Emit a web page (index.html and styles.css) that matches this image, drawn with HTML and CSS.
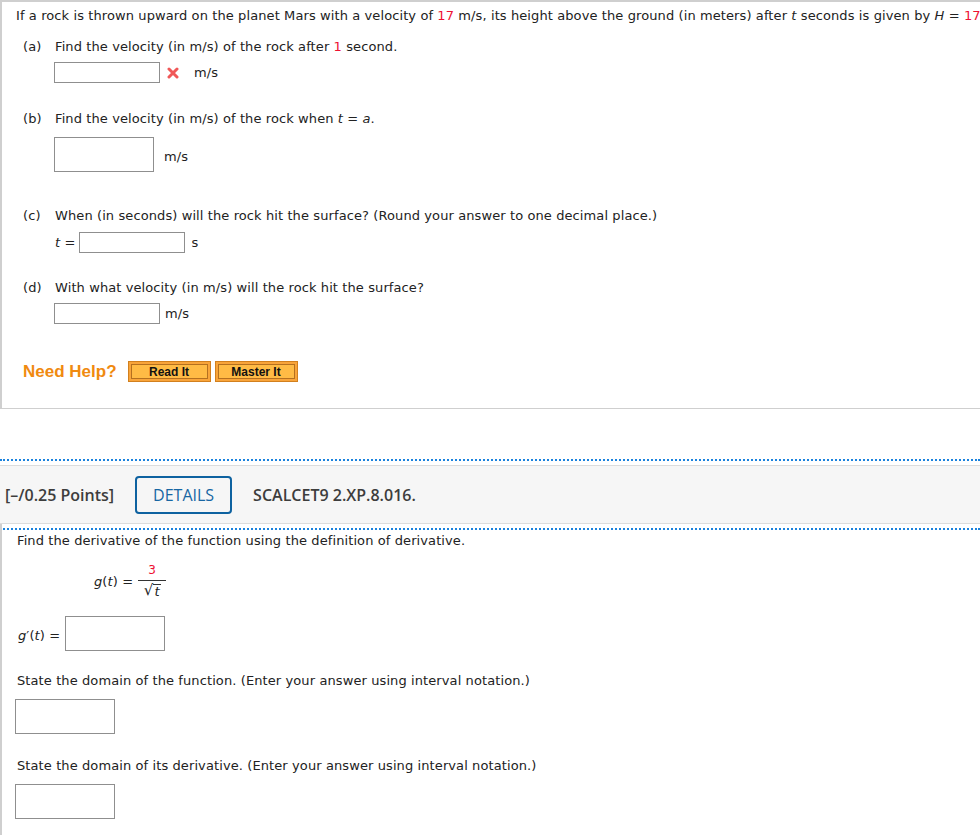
FILE: index.html
```html
<!DOCTYPE html>
<html>
<head>
<meta charset="utf-8">
<link rel="stylesheet" href="styles.css">
</head>
<body>
<div class="panel panel-top">
  <p class="intro">If a rock is thrown upward on the planet Mars with a velocity of <span class="red">17</span> m/s, its height above the ground (in meters) after <i>t</i> seconds is given by <i>H</i> = <span class="red">17</span><i>t</i> − <span class="red">1.86</span><i>t</i><sup>2</sup>.</p>

  <div class="part part-a">
    <span class="plabel">(a)</span><span>Find the velocity (in m/s) of the rock after <span class="red">1</span> second.</span>
  </div>
  <div class="answer answer-a">
    <span class="inp inp-small"></span>
    <svg class="xmark" width="12" height="12" viewBox="0 0 12 12"><path d="M2 2 L10 10 M10 2 L2 10" stroke="#f05858" stroke-width="3" stroke-linecap="round"/></svg>
    <span class="unit unit-a">m/s</span>
  </div>

  <div class="part part-b">
    <span class="plabel">(b)</span><span>Find the velocity (in m/s) of the rock when <i>t</i> = <i>a</i>.</span>
  </div>
  <div class="answer answer-b">
    <span class="inp inp-big"></span>
    <span class="unit unit-b">m/s</span>
  </div>

  <div class="part part-c">
    <span class="plabel">(c)</span><span>When (in seconds) will the rock hit the surface? (Round your answer to one decimal place.)</span>
  </div>
  <div class="answer answer-c">
    <span class="teq"><i>t</i> =</span>
    <span class="inp inp-small"></span>
    <span class="unit unit-c">s</span>
  </div>

  <div class="part part-d">
    <span class="plabel">(d)</span><span>With what velocity (in m/s) will the rock hit the surface?</span>
  </div>
  <div class="answer answer-d">
    <span class="inp inp-small"></span>
    <span class="unit unit-d">m/s</span>
  </div>

  <div class="help">
    <span class="need">Need Help?</span>
    <span class="btn"><span class="btn-in">Read It</span></span>
    <span class="btn"><span class="btn-in">Master It</span></span>
  </div>
</div>

<div class="dots dots-first"></div>
<div class="qhead">
  <span class="points">[–/0.25 Points]</span>
  <span class="details">DETAILS</span>
  <span class="code">SCALCET9 2.XP.8.016.</span>
</div>
<div class="dots"></div>

<div class="panel panel-bottom">
  <p class="find">Find the derivative of the function using the definition of derivative.</p>
  <div class="formula">
    <span class="fn"><i>g</i>(<i>t</i>) =</span>
    <span class="frac">
      <span class="num red">3</span>
      <span class="den"><span class="rad">√</span><span class="radicand"><i>t</i></span></span>
    </span>
  </div>
  <div class="gprime">
    <span class="fn"><i>g</i>′(<i>t</i>) =</span>
    <span class="inp inp-big"></span>
  </div>
  <p class="domain">State the domain of the function. (Enter your answer using interval notation.)</p>
  <span class="inp inp-big block"></span>
  <p class="domain domain-2">State the domain of its derivative. (Enter your answer using interval notation.)</p>
  <span class="inp inp-big block"></span>
</div>
</body>
</html>
```
FILE: styles.css
```css
html, body {
  margin: 0;
  padding: 0;
  overflow: hidden;
  background: #fff;
}
body {
  font-family: "DejaVu Sans", Verdana, sans-serif;
  font-size: 13px;
  letter-spacing: 0.1px;
  color: #222;
  width: 980px;
}
p { margin: 0; }
.red { color: #ee1133; }
i { font-style: italic; }
sup { font-size: 9px; line-height: 0; }

.panel {
  border-left: 2px solid #cfcfcf;
}
.panel-top {
  border-top: 2px solid #cfcfcf;
  border-bottom: 1px solid #cfcfcf;
  padding: 5px 0 26px 14px;
  width: 1200px;
}
.intro {
  line-height: 18px;
  white-space: nowrap;
}
.part {
  display: flex;
  line-height: 18px;
  padding-left: 7px;
}
.plabel { width: 32px; flex: none; }
.part-a { margin-top: 13px; }
.part-b { margin-top: 27px; }
.part-c { margin-top: 35px; }
.part-d { margin-top: 26px; }

.answer {
  display: flex;
  align-items: center;
  padding-left: 38px;
}
.answer-a { margin-top: 6px; }
.answer-b { margin-top: 9px; }
.answer-c { margin-top: 7px; padding-left: 39px; }
.answer-d { margin-top: 6px; }

.inp {
  display: inline-block;
  box-sizing: border-box;
  border: 1px solid #8f8f8f;
  background: #fff;
}
.inp-small { width: 106px; height: 21px; }
.inp-big { width: 100px; height: 35px; }
.block { display: block; }

.xmark { margin-left: 7px; }
.unit-a { margin-left: 15px; }
.unit-b { margin-left: 10px; padding-top: 3px; }
.unit-c { margin-left: 6px; }
.unit-d { margin-left: 5px; }
.teq { margin-right: 4px; }

.help {
  margin-top: 37px;
  padding-left: 7px;
  display: flex;
  align-items: center;
  height: 21px;
}
.need {
  font-family: "Liberation Sans", Arial, sans-serif;
  font-weight: bold;
  font-size: 17px;
  letter-spacing: 0;
  color: #f08a10;
  margin-right: 11px;
}
.btn {
  box-sizing: border-box;
  width: 83px;
  height: 21px;
  border: 1px solid #d2801e;
  background: #f8a43a;
  padding: 2px;
  margin-right: 4px;
  display: flex;
}
.btn-in {
  flex: 1;
  border: 1px solid #b5701f;
  background: #ffbb45;
  font-family: "Liberation Sans", Arial, sans-serif;
  font-weight: bold;
  font-size: 12px;
  letter-spacing: 0;
  color: #111;
  display: flex;
  align-items: center;
  justify-content: center;
}

.dots {
  border-top: 2px dotted #1a82dd;
  height: 0;
}
.dots-first { margin-top: 50px; }
.qhead {
  margin: 4px 0;
  height: 59px;
  box-sizing: border-box;
  border-top: 1px solid #dcdcdc;
  border-bottom: 1px solid #dcdcdc;
  background: #f6f6f6;
  display: flex;
  align-items: center;
  padding-left: 5px;
  font-family: "Open Sans", sans-serif;
  font-size: 16px;
  letter-spacing: 0;
  color: #3d3d3d;
}
.points { font-weight: 600; }
.details {
  margin-left: 21px;
  box-sizing: border-box;
  width: 97px;
  height: 38px;
  border: 2px solid #0e62a0;
  border-radius: 4px;
  color: #1766a3;
  display: flex;
  align-items: center;
  justify-content: center;
}
.code { font-weight: 600; margin-left: 21px; }

.panel-bottom {
  padding: 9px 0 20px 14px;
  margin-top: -6px;
}
.find { line-height: 16px; padding-left: 1px; }
.formula {
  display: flex;
  align-items: center;
  margin-top: 14px;
  padding-left: 78px;
}
.fn { margin-right: 5px; }
.frac {
  display: inline-flex;
  flex-direction: column;
  align-items: center;
  width: 28px;
}
.num {
  font-size: 12px;
  line-height: 15px;
  border-bottom: 1px solid #333;
  width: 100%;
  text-align: center;
  padding-bottom: 2px;
}
.den {
  display: flex;
  align-items: flex-end;
  line-height: 17px;
  margin-top: 1px;
}
.rad { font-size: 15px; }
.radicand { border-top: 1px solid #333; padding: 0 1px; line-height: 14px; }
.gprime {
  display: flex;
  align-items: center;
  margin-top: 17px;
  padding-left: 2px;
}
.gprime .fn { margin-right: 5px; padding-top: 3px; }
.domain { margin-top: 22px; line-height: 16px; padding-left: 1px; }
.domain + .inp { margin-top: 10px; margin-left: -1px; }
.domain-2 { margin-top: 24px; }
```
